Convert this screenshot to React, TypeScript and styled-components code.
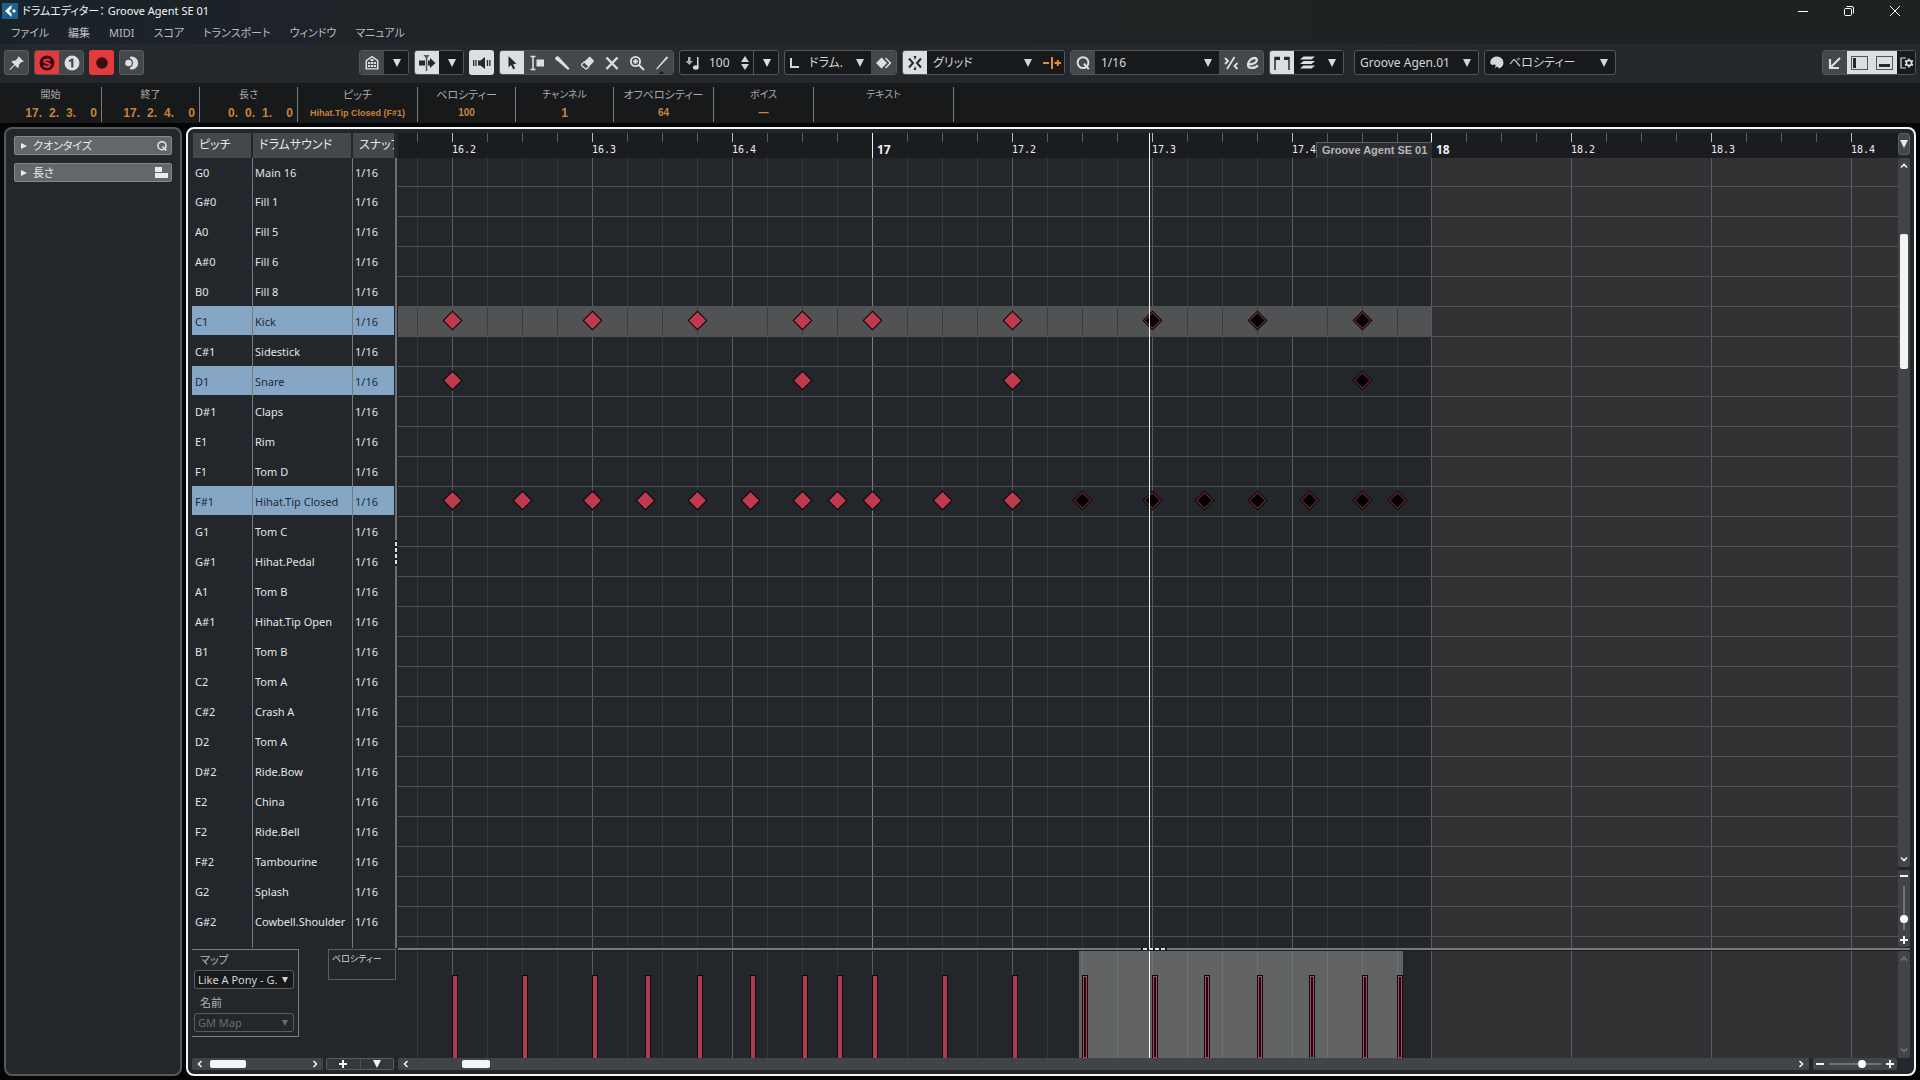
import React from "react";
import styled, { createGlobalStyle, css } from "styled-components";

const SANS = `"Noto Sans", "Noto Sans CJK JP", sans-serif`;

const Global = createGlobalStyle`
  *, *::before, *::after { box-sizing: border-box; }
  html, body { margin: 0; background: #050506; }
  body {
    font-family: ${SANS};
    font-feature-settings: "palt";
    font-size: 11px;
    color: #d4d6d8;
    overflow: hidden;
  }
  button, select, input { font: inherit; font-feature-settings: inherit; color: inherit; }
  svg { display: block; flex: none; }
  h1, h2, p { margin: 0; font-weight: 400; }
`;

const Window = styled.div`
  display: flex;
  flex-direction: column;
  height: 100vh;
`;

/* ---------- title and menu ---------- */

const Chrome = styled.header`
  display: flex;
  flex-direction: column;
  background: linear-gradient(90deg, #1a2229, #202427 30%, #1e2222 80%);
`;

const TitleBar = styled.div`
  display: flex;
  align-items: center;
  height: 22px;
  padding: 0 2px;
  gap: 4px;
`;

const Title = styled.h1`
  flex: 1;
  display: flex;
  gap: 3px;
  font-size: 11px;
  line-height: 20px;
  color: #f1f3f4;
`;

const WindowButtons = styled.div`
  display: flex;
`;

const WindowButton = styled.button`
  display: grid;
  place-items: center;
  width: 46px;
  height: 22px;
  padding: 0;
  border: 0;
  background: none;
`;

const MenuBar = styled.nav`
  display: flex;
  align-items: center;
  gap: 19px;
  height: 22px;
  padding: 0 11px;
`;

const MenuItem = styled.button`
  padding: 0;
  border: 0;
  background: none;
  font-size: 11px;
  line-height: 20px;
  color: #b9bcbf;
  white-space: nowrap;
`;

/* ---------- toolbar ---------- */

const Toolbar = styled.div`
  display: flex;
  align-items: center;
  gap: 5px;
  height: 39px;
  padding: 0 4px 2px;
  background: #24282c;
`;

const Group = styled.div<{ $before?: string }>`
  display: flex;
  height: 25px;
  border: 1px solid #53575a;
  border-radius: 3px;
  background: #17191b;
  overflow: hidden;
  margin-left: ${(p) => p.$before ?? "0"};
`;

type Tone = "grey" | "white" | "red" | "dark";
const tones = {
  grey: css`background: #45484b; color: #dcdedf;`,
  white: css`background: #dcdedf; color: #26292c;`,
  red: css`background: #e23b3f; color: #3a0d10;`,
  dark: css`background: #17191b; color: #dcdedf;`,
};

const ToolButton = styled.button<{ $tone?: Tone; $w?: number }>`
  display: grid;
  place-items: center;
  flex: none;
  width: ${(p) => p.$w ?? 25}px;
  height: 25px;
  margin: -1px 0;
  padding: 0;
  border: 0;
  ${(p) => tones[p.$tone ?? "grey"]}
  &:first-child { margin-left: -1px; }
  &:last-child { margin-right: -1px; }
`;

const Framed = styled(ToolButton)`
  border: 1px solid #5a5d60;
  border-radius: 3px;
  margin: 0;
  ${(p) => p.$tone !== "grey" && "border-color: transparent;"}
  &:first-child, &:last-child { margin: 0; }
`;

const PickBox = styled.div<{ $w: number }>`
  position: relative;
  display: flex;
  align-items: center;
  width: ${(p) => p.$w}px;
`;

const Pick = styled.select<{ $pad?: number; $end?: number; $size?: number }>`
  appearance: none;
  width: 100%;
  height: 100%;
  padding: 0 ${(p) => p.$end ?? 20}px 0 ${(p) => p.$pad ?? 6}px;
  border: 0;
  background: none;
  font-size: ${(p) => p.$size ?? 12}px;
  text-overflow: clip;
  option { background: #17191b; }
  &:disabled { opacity: 1; }
`;

const PickCaret = styled.span<{ $right?: number }>`
  position: absolute;
  right: ${(p) => p.$right ?? 7}px;
  top: 50%;
  transform: translateY(-50%);
  pointer-events: none;
`;

const PickIcon = styled.span`
  position: absolute;
  left: 4px;
  pointer-events: none;
`;

const VelocityBox = styled.label`
  display: flex;
  align-items: center;
  gap: 8px;
  width: 74px;
  padding-left: 5px;
  border-right: 1px solid #53575a;
`;

const NumberInput = styled.input`
  width: 24px;
  padding: 0;
  border: 0;
  background: none;
  font-size: 12px;
`;

/* ---------- info line ---------- */

const InfoLine = styled.dl`
  display: flex;
  flex: none;
  height: 40px;
  margin: 0;
  padding: 4px 0 1px;
  background: #17191b;
`;

const InfoCell = styled.div<{ $w: number }>`
  display: flex;
  flex-direction: column;
  width: ${(p) => p.$w}px;
  border-right: 1px solid #7c7f81;
  text-align: center;
`;

const InfoLabel = styled.dt<{ $big?: boolean }>`
  font-size: ${(p) => (p.$big ? 11 : 10)}px;
  line-height: 15px;
  color: #a9abad;
`;

const InfoValue = styled.dd<{ $size?: number }>`
  margin: 0;
  font-family: "Liberation Sans", sans-serif;
  font-size: ${(p) => p.$size ?? 12}px;
  font-weight: 700;
  line-height: 22px;
  color: #c8853a;
  white-space: nowrap;
`;

const Position = styled.span`
  display: grid;
  grid-template-columns: 22px 17px 17px 21px;
  justify-content: end;
  padding-right: 4px;
  text-align: right;
`;

/* ---------- work area ---------- */

const Work = styled.main`
  display: flex;
  flex: 1;
  min-height: 0;
  gap: 4px;
  padding: 4px 4px 4px;
`;

const Inspector = styled.aside`
  display: flex;
  flex-direction: column;
  flex: none;
  gap: 8px;
  width: 178px;
  padding: 7px 8px;
  border: 2px solid #55585a;
  border-radius: 8px;
  background: #23272b;
`;

const SectionButton = styled.button`
  display: flex;
  align-items: center;
  gap: 6px;
  height: 19px;
  padding: 0 3px 0 6px;
  border: 1px solid #85888a;
  border-radius: 2px;
  background: #646769;
  color: #e8eaeb;
  font-size: 11px;
  line-height: 17px;
  svg:last-child { margin-left: auto; }
`;

const Editor = styled.section`
  display: grid;
  flex: 1;
  min-width: 0;
  grid-template-columns: 206px minmax(0, 1fr) 12px;
  grid-template-rows: 25px minmax(0, 1fr) 3px 107px 12px;
  padding: 4px;
  border: 2px solid #f4f5f5;
  border-radius: 8px;
  background: #23272b;
`;

const ListPane = styled.div`
  position: relative;
  grid-column: 1;
  grid-row: 1 / 3;
  overflow: hidden;
`;

const SoundTable = styled.table`
  width: 202px;
  table-layout: fixed;
  border-collapse: separate;
  border-spacing: 0;
`;

const HeadCell = styled.th`
  height: 25px;
  padding: 0 0 2px 6px;
  border-right: 2px solid #23272b;
  background: #45484b;
  font-size: 12px;
  font-weight: 400;
  line-height: 20px;
  text-align: left;
  white-space: nowrap;
  overflow: hidden;
  color: #e6e8e9;
  &:first-child { border-left: 1px solid #23272b; }
  &:last-child { border-right: 0; }
`;

const SoundRow = styled.tr<{ $on: boolean }>`
  height: 30px;
  &:first-child { height: 28px; }
  color: ${(p) => (p.$on ? "#1d2b3a" : "#e2e4e5")};
  background: ${(p) => (p.$on ? "linear-gradient(#86a6c6 29px, transparent 29px)" : "none")};
`;

const SoundCell = styled.td`
  padding: 2px 0 0 2px;
  border-right: 1px solid #777a7c;
  font-size: 11px;
  line-height: 16px;
  white-space: nowrap;
  &:first-child { padding-left: 3px; }
  &:last-child { border-right: 0; }
`;

const Splitter = styled.div`
  position: absolute;
  top: 25px;
  bottom: 0;
  right: 1px;
  display: grid;
  align-content: center;
  width: 2px;
  background: #6d7072;
`;

const Grip = styled.span<{ $wide?: boolean }>`
  display: flex;
  flex-direction: ${(p) => (p.$wide ? "row" : "column")};
  gap: 2px;
  padding: ${(p) => (p.$wide ? "0 2px" : "2px 0")};
  background: #1a1c1e;
  i {
    width: ${(p) => (p.$wide ? 4 : 2)}px;
    height: ${(p) => (p.$wide ? 2 : 4)}px;
    background: #dfe1e2;
  }
`;

const Ruler = styled.div`
  position: relative;
  grid-column: 2;
  grid-row: 1;
  overflow: hidden;
  background: #1b1c20;
`;

const RulerLabel = styled.span<{ $bar: boolean }>`
  position: absolute;
  top: 9px;
  font-family: ${(p) => (p.$bar ? SANS : `"DejaVu Sans Mono", monospace`)};
  font-size: ${(p) => (p.$bar ? 12 : 10)}px;
  font-weight: ${(p) => (p.$bar ? 700 : 400)};
  line-height: 16px;
  color: #eceeef;
`;

const PartLabel = styled.span`
  position: absolute;
  top: 9px;
  height: 16px;
  padding: 0 5px;
  border: 1px solid #5c5f62;
  border-width: 1px 0 0 1px;
  background: #2c2d31;
  font: 700 11px/15px "Liberation Sans", sans-serif;
  color: #b5b7b9;
  white-space: nowrap;
`;

const NoteArea = styled.div`
  position: relative;
  grid-column: 2;
  grid-row: 2;
  overflow: hidden;
`;

const LaneArea = styled(NoteArea)`
  grid-row: 4;
`;

const Divider = styled.div`
  position: relative;
  grid-column: 2 / 4;
  grid-row: 3;
  background: linear-gradient(#77797b 2px, #1b1d20 2px);
`;

const GripSpot = styled.span`
  position: absolute;
  top: 0;
  transform: translateX(-50%);
`;

const Playhead = styled.span`
  position: absolute;
  top: 0;
  bottom: 0;
  width: 1px;
  background: #f5f6f6;
`;

const RulerMenu = styled.button`
  display: grid;
  place-items: center;
  grid-column: 3;
  grid-row: 1;
  height: 22px;
  padding: 0;
  border: 1px solid #5c5f62;
  border-radius: 3px;
  background: #45484b;
  color: #e4e6e7;
`;

/* ---------- lower left ---------- */

const LaneHead = styled.div`
  display: flex;
  justify-content: space-between;
  align-items: flex-start;
  grid-column: 1;
  grid-row: 3 / 5;
  padding: 1px 2px 0 0;
`;

const MapBox = styled.div`
  display: flex;
  flex-direction: column;
  width: 107px;
  height: 88px;
  padding: 0 4px 0 2px;
  border: 1px solid #7b7e80;
  border-left: 0;
`;

const MapLabel = styled.label<{ $lower?: boolean }>`
  padding: ${(p) => (p.$lower ? "4px 6px 0" : "0 6px")};
  font-size: 11px;
  line-height: 20px;
  color: #b4b6b8;
`;

const MapField = styled.div<{ $off?: boolean }>`
  position: relative;
  height: 19px;
  border: 1px solid #5a5d60;
  border-radius: 3px;
  background: ${(p) => (p.$off ? "none" : "#17191b")};
  color: ${(p) => (p.$off ? "#696c6f" : "#d4d6d8")};
`;

const LaneName = styled.button`
  width: 68px;
  height: 31px;
  padding: 0 0 12px 3px;
  border: 1px solid #5a5d60;
  background: none;
  font-size: 9px;
  line-height: 14px;
  text-align: left;
`;

/* ---------- scroll bars ---------- */

const HScroll = styled.div<{ $grow?: boolean; $w?: number }>`
  display: flex;
  align-items: center;
  flex: ${(p) => (p.$grow ? "1" : "none")};
  width: ${(p) => (p.$w ? `${p.$w}px` : "auto")};
  height: 12px;
  padding: 0 4px;
  border-radius: 2px;
  background: #424547;
`;

const VScroll = styled.div`
  display: flex;
  flex-direction: column;
  align-items: center;
  flex: 1;
  width: 12px;
  padding: 4px 0;
  border-radius: 2px;
  background: #424547;
`;

const ScrollArrow = styled.button<{ $off?: boolean }>`
  display: grid;
  place-items: center;
  flex: none;
  width: 8px;
  height: 8px;
  padding: 0;
  border: 0;
  background: none;
  color: ${(p) => (p.$off ? "#74777a" : "#f1f2f3")};
`;

const ScrollTrack = styled.div<{ $vertical?: boolean }>`
  display: flex;
  flex-direction: ${(p) => (p.$vertical ? "column" : "row")};
  flex: 1;
`;

const HThumb = styled.span<{ $before: number; $w: number }>`
  width: ${(p) => p.$w}px;
  height: 8px;
  margin-left: ${(p) => p.$before}px;
  border-radius: 2px;
  background: #f3f4f4;
`;

const VThumb = styled.span`
  width: 8px;
  height: 135px;
  margin-top: 64px;
  border-radius: 2px;
  background: #f3f4f4;
`;

const LeftBottom = styled.div`
  display: flex;
  gap: 3px;
  grid-column: 1;
  grid-row: 5;
  padding-right: 4px;
`;

const LanePair = styled.div`
  display: flex;
  flex: 1;
  border: 1px solid #5a5d60;
  border-radius: 2px;
  background: #33363a;
`;

const LaneButton = styled.button`
  display: grid;
  place-items: center;
  flex: 1;
  height: 10px;
  padding: 0;
  border: 0;
  background: none;
  color: #f1f2f3;
  & + & { border-left: 1px solid #4c4f52; }
`;

const MainBottom = styled.div`
  display: flex;
  gap: 4px;
  grid-column: 2;
  grid-row: 5;
  padding-right: 1px;
`;

const RightSide = styled.div`
  display: flex;
  flex-direction: column;
  gap: 3px;
  grid-column: 3;
  grid-row: 2;
  padding-bottom: 1px;
`;

const LaneSide = styled.div`
  display: flex;
  grid-column: 3;
  grid-row: 4;
`;

const ZoomV = styled(VScroll)`
  flex: none;
  height: 77px;
  padding: 2px 0 3px;
`;

const ZoomH = styled(HScroll)`
  width: 84px;
  padding: 0 3px;
`;

const ZoomRange = styled.input<{ $vertical?: boolean }>`
  appearance: none;
  flex: 1;
  min-width: 0;
  min-height: 0;
  margin: ${(p) => (p.$vertical ? "6px 0" : "0 5px")};
  background: none;
  ${(p) => p.$vertical && "writing-mode: vertical-lr; width: 8px;"}
  &::-webkit-slider-runnable-track {
    ${(p) => (p.$vertical ? "width: 2px; height: 100%;" : "height: 2px;")}
    background: #717476;
  }
  &::-webkit-slider-thumb {
    appearance: none;
    width: 8px;
    height: 8px;
    ${(p) => (p.$vertical ? "margin-left: -3px;" : "margin-top: -3px;")}
    border-radius: 50%;
    background: #fff;
  }
`;

/* ---------- data ---------- */

const sounds: [string, string][] = [
  ["G0", "Main 16"], ["G#0", "Fill 1"], ["A0", "Fill 5"], ["A#0", "Fill 6"], ["B0", "Fill 8"],
  ["C1", "Kick"], ["C#1", "Sidestick"], ["D1", "Snare"], ["D#1", "Claps"], ["E1", "Rim"],
  ["F1", "Tom D"], ["F#1", "Hihat.Tip Closed"], ["G1", "Tom C"], ["G#1", "Hihat.Pedal"],
  ["A1", "Tom B"], ["A#1", "Hihat.Tip Open"], ["B1", "Tom B"], ["C2", "Tom A"],
  ["C#2", "Crash A"], ["D2", "Tom A"], ["D#2", "Ride.Bow"], ["E2", "China"],
  ["F2", "Ride.Bell"], ["F#2", "Tambourine"], ["G2", "Splash"], ["G#2", "Cowbell.Shoulder"],
  ["A2", "Crash B"],
];
const selectedPitches = ["C1", "D1", "F#1"];

const hits: { row: number; steps: number[] }[] = [
  { row: 5, steps: [0, 4, 7, 10, 12, 16, 20, 23, 26] },
  { row: 7, steps: [0, 10, 16, 26] },
  { row: 11, steps: [0, 2, 4, 5.5, 7, 8.5, 10, 11, 12, 14, 16, 18, 20, 21.5, 23, 24.5, 26, 27] },
];
const firstSelected = 18;
const partEnd = 28;

/** Horizontal place of a sixteenth step, counted from bar 16 beat 2. */
const stepX = (step: number) => Math.floor(54.89 + step * 34.968);
const steps = Array.from({ length: 42 }, (_, i) => i - 1);
const rowLines = Array.from({ length: 70 }, (_, i) => 28 + i * 30);
const playheadX = 751;

const beats: [number, string][] = [
  [0, "16.2"], [4, "16.3"], [8, "16.4"], [12, "17"], [16, "17.2"], [20, "17.3"],
  [24, "17.4"], [28, "18"], [32, "18.2"], [36, "18.3"], [40, "18.4"],
];

/* ---------- icons ---------- */

const Svg = ({ s = 16, children }: { s?: number; children: React.ReactNode }) => (
  <svg width={s} height={s} viewBox="0 0 16 16" fill="currentColor" aria-hidden="true">{children}</svg>
);
const Caret = ({ s = 8 }: { s?: number }) => (
  <svg width={s} height={s} viewBox="0 0 8 8" fill="currentColor" aria-hidden="true"><path d="M0 0h8L4 8z" /></svg>
);
const Chevron = ({ turn }: { turn: number }) => (
  <svg width="8" height="8" viewBox="0 0 8 8" fill="none" stroke="currentColor" strokeWidth="1.6" aria-hidden="true">
    <path d="M2.5 1l3 3-3 3" transform={`rotate(${turn} 4 4)`} />
  </svg>
);
const Minus = () => <svg width="8" height="8" aria-hidden="true"><path d="M0 3h8v2H0z" fill="currentColor" /></svg>;
const Plus = () => <svg width="8" height="8" aria-hidden="true"><path d="M0 3h3V0h2v3h3v2H5v3H3V5H0z" fill="currentColor" /></svg>;
const QGlyph = ({ s = 16 }: { s?: number }) => (
  <Svg s={s}><circle cx="8" cy="7.6" r="5.4" fill="none" stroke="currentColor" strokeWidth="2" /><path d="M8 9.2l1.6-1.2 5 5.4-1.6 1.4z" /></Svg>
);

const icons = {
  pin: <Svg><path d="M9.6 1.2l5.2 5.2-1.6.6-1 .2-2.4 2.5.1 2.3-1.1 1.1-2.9-2.8-4.4 4.4-.9.2.2-.9 4.5-4.4L2.4 6.8l1.2-1.1 2.4.1 2.5-2.4.2-1z" /></Svg>,
  solo: <Svg><circle cx="8" cy="8" r="7.5" /><path d="M11 5.8C10.500 4.200 5.200 3.800 5.200 6.200c0 2.300 5.700 1.300 5.700 3.800 0 2.400-5.500 2.100-6 .2" fill="none" stroke="#e23b3f" strokeWidth="1.900" /></Svg>,
  one: <Svg><circle cx="8" cy="8" r="7.5" /><path d="M7.200 12.500V6.200L5 7.300V5.200l2.700-1.700h1.700v9z" fill="#45484b" /></Svg>,
  rec: <Svg><circle cx="8" cy="8" r="5.8" /></Svg>,
  moon: <Svg><path d="M6.500 1.500a6.600 6.600 0 1 1 0 13l-.8-1.800a5 5 0 0 0 0-9.400z" /><circle cx="4.500" cy="8" r="3.300" /></Svg>,
  house: <Svg><path d="M8 .8l6.500 4.400V14.500h-13V5.200z" /><path d="M3 6v7.200h10V6L8 2.600z" fill="#45484b" /><path d="M6.500 4h3v2h-3zM4 7h2.300v2H4zM7 7h2v2H7zM9.700 7H12v2H9.700zM4 10h2.300v2H4zM7 10h2v2H7zM9.700 10H12v2H9.700z" /></Svg>,
  follow: <svg width="18" height="16" viewBox="0 0 18 16" fill="currentColor" aria-hidden="true"><path d="M1 5.500h6v5H1zM10 5.500h2V3l5.500 5-5.500 5v-2.500h-2z" /><path d="M5.500 0h6L9.300 3v13H7.800V3z" opacity=".75" /></svg>,
  speaker: <svg width="20" height="16" viewBox="0 0 20 16" fill="currentColor" aria-hidden="true"><path d="M6 5.500h2.500L13 2v12l-4.500-3.500H6zM1 5h1.300v6H1zM3.300 5h1.300v6H3.300zM14.800 5h1.300v6h-1.300zM17.200 5h1.300v6h-1.300z" /></svg>,
  arrow: <Svg><path d="M4.500 1l8 7.800-3.400.3 2 4.300-2 .9-2-4.400-2.600 2.400z" /></Svg>,
  range: <Svg><path d="M1.500 1.500h5M1.500 14.500h5M4 1.500v13" fill="none" stroke="currentColor" strokeWidth="1.6" /><path d="M7.500 4.500H15v7H7.500z" /></Svg>,
  stick: <Svg><path d="M1.500 2.500a2 2 0 0 1 3.500-.5L15.500 13.500l-1.500 1.500L3 5.500a2 2 0 0 1-1.500-3z" /></Svg>,
  eraser: <Svg><path d="M9.800 2.300c.6-.6 1.200-.6 1.800 0l2.900 2.900c.6.6.6 1.200 0 1.800L10 11.500 5.300 6.800z" /><path d="M5.300 6.800L10 11.500l-2 2c-.6.6-1.200.6-1.800 0L2.900 10.700c-.6-.6-.6-1.200 0-1.800z" fill="none" stroke="currentColor" strokeWidth="1.300" /></Svg>,
  cross: <Svg><path d="M2.500 2.500l11 11.500M13.500 2.500L2.500 14" fill="none" stroke="currentColor" strokeWidth="2.400" /></Svg>,
  zoom: <Svg><circle cx="6.500" cy="6.500" r="4.600" fill="none" stroke="currentColor" strokeWidth="1.900" /><path d="M10 10l5 5M6.500 4v5M4 6.500h5" stroke="currentColor" strokeWidth="1.900" /></Svg>,
  line: <svg width="16" height="24" viewBox="0 -4 16 24" fill="currentColor" aria-hidden="true"><path d="M12.500 1.500l1.800 1L3.500 14l-2 .5z" /><path d="M3.500 20l4-4 4 4z" fill="#17191b" /></svg>,
  insertVel: <Svg><path d="M3 2h2.500v4H8L4.300 10 .500 6H3z" opacity=".8" /><path d="M12 2h1.500v10.500H12z" /><ellipse cx="10.800" cy="12.500" rx="2.800" ry="2.200" /></Svg>,
  spin: <svg width="8" height="14" viewBox="0 0 8 14" fill="currentColor" aria-hidden="true"><path d="M4 0l4 6H0zM4 14l4-6H0z" /></svg>,
  corner: <Svg><path d="M1 3h2v8h7v2H1z" /></Svg>,
  diamonds: <Svg><path d="M5.500 2.500L11 8l-5.500 5.500L0 8zM9 3.500l1-1L15.500 8 10 13.500l-1-1L13.300 8z" /></Svg>,
  snap: <Svg><path d="M2 3.500L6 8l-4 4.500M14 3.500L10 8l4 4.500" fill="none" stroke="currentColor" strokeWidth="2" /><path d="M6.500 1h3L8 5zM6.500 15h3L8 11z" /></Svg>,
  gridRel: <svg width="18" height="14" viewBox="0 0 18 14" fill="none" stroke="#e08f3c" strokeWidth="2" aria-hidden="true"><path d="M0 7h6M9 1v12M11.500 7H18M14.800 4v6" /></svg>,
  swing: <Svg><path d="M2 3l3 3-3 3M11.500 2L4 14M14.500 8l-3 3 3 3" fill="none" stroke="currentColor" strokeWidth="1.800" /></Svg>,
  edit: <Svg><path d="M3.500 9.500C13 9 13.500 3.500 9.500 3 6 2.800 3 7 3 9.800 3 14 9 13.800 13 10.500" fill="none" stroke="currentColor" strokeWidth="2.300" /></Svg>,
  bars: <svg width="18" height="16" viewBox="0 0 18 16" aria-hidden="true"><path d="M2 15V2.500h4V5M16 15V2.500h-4V5" fill="none" stroke="currentColor" strokeWidth="1.500" /><path d="M2 2h5v3H2zM11 2h5v3h-5z" fill="currentColor" /></svg>,
  layers: <Svg><path d="M4.500 1.500H16l-3.500 3H1zM4.500 6H16l-3.500 3H1zM4.500 10.500H16l-3.500 3H1z" /></Svg>,
  palette: <Svg><path d="M8 1.500a6.500 6.200 0 1 1 0 12.400c-1.700 0-2.300-1-1.600-2.400.7-1.500-.3-2.300-1.800-1.700-1.600.5-3.300-.2-3.300-2.300C1.300 4 4.300 1.500 8 1.500z" /><circle cx="8" cy="13.500" r="1.700" fill="#17191b" /></Svg>,
  corner2: <Svg><path d="M3 4v9h9M3.500 12.500L13 3" fill="none" stroke="currentColor" strokeWidth="2.200" /></Svg>,
  panelLeft: <svg width="17" height="14" aria-hidden="true"><rect x=".5" y=".5" width="16" height="13" fill="none" stroke="#55585a" /><path d="M2 2h3v10H2z" fill="#26292c" /></svg>,
  panelLow: <svg width="17" height="14" aria-hidden="true"><rect x=".5" y=".5" width="16" height="13" fill="none" stroke="#55585a" /><path d="M3 8h11v3H3z" fill="#26292c" /></svg>,
  setup: <svg width="14" height="12" viewBox="0 0 14 12" fill="none" stroke="currentColor" aria-hidden="true"><path d="M6 1H1v10h5" strokeWidth="1.200" /><circle cx="9" cy="6" r="2.600" strokeWidth="1.600" /><path d="M9 1.400v2M9 8.600v2M5 3.700l1.700 1M11.300 7.300l1.700 1M5 8.300l1.700-1M11.300 4.700l1.700-1" strokeWidth="1.600" /></svg>,
};

const Dropdown = ({ label, value, w, pad, right, icon, size }: {
  label: string; value: string; w: number; pad?: number; right?: number; icon?: React.ReactNode; size?: number;
}) => (
  <PickBox $w={w}>
    {icon && <PickIcon>{icon}</PickIcon>}
    <Pick aria-label={label} $pad={pad} $size={size} defaultValue={value}><option>{value}</option></Pick>
    <PickCaret $right={right}><Caret /></PickCaret>
  </PickBox>
);

/* ---------- parts ---------- */

const Arrange = () => (
  <svg width="100%" height="100%" shapeRendering="crispEdges" role="img" aria-label="ノート">
    <rect x={stepX(partEnd)} width="100%" height="100%" fill="#323235" />
    {steps.filter((s) => s < partEnd || s % 4 === 0).map((s) => (
      <rect key={s} x={stepX(s)} width="1" height="100%" fill={s === 12 ? "#7b7e80" : s % 4 === 0 ? "#5b5e61" : "#34383b"} />
    ))}
    {rowLines.map((y) => <rect key={y} y={y} width="100%" height="1" fill="#505356" />)}
    <rect y="148" width={stepX(partEnd)} height="31" fill="#505253" />
    {steps.filter((s) => s < partEnd && s % 4 !== 0).map((s) => (
      <rect key={s} x={stepX(s)} y="149" width="1" height="28" fill="#3b3e40" />
    ))}
    {hits.map(({ row, steps: at }) => at.map((s) => {
      const x = stepX(s);
      const y = 12 + row * 30;
      const on = s >= firstSelected;
      const diamond = (r: number) => `M${x} ${y - r}l${r} ${r}l${-r} ${r}l${-r} ${-r}z`;
      return (
        <g key={`${row}-${s}`} shapeRendering="auto" transform="translate(.5 .5)">
          <path d={diamond(10)} fill="#0b0506" />
          <path d={diamond(8.5)} fill={on ? "#8d3442" : "#c03a4f"} />
          {on && <path d={diamond(7.3)} fill="#000" />}
        </g>
      );
    }))}
  </svg>
);

const VelocityLane = () => (
  <svg width="100%" height="100%" shapeRendering="crispEdges" role="img" aria-label="ベロシティー">
    <rect x={stepX(partEnd)} width="100%" height="100%" fill="#323235" />
    <rect x="681" width="324" height="107" fill="#616364" />
    {steps.filter((s) => s < partEnd || s % 4 === 0).map((s) => (
      <rect key={s} x={stepX(s)} width="1" height="100%" fill={s >= 18 && s < partEnd ? "#707373" : s % 4 === 0 ? "#5b5e61" : "#34383b"} />
    ))}
    {hits[2].steps.map((s) => {
      const on = s >= firstSelected;
      return (
        <g key={s}>
          <rect x={stepX(s)} y="24" width="6" height="83" fill="#170709" />
          <rect x={stepX(s) + 1} y="25" width="4" height="82" fill={on ? "#a0506a" : "#ac3d50"} />
          {on && <rect x={stepX(s) + 2} y="26" width="2" height="80" fill="#24060b" />}
        </g>
      );
    })}
  </svg>
);

export default function App() {
  return (
    <>
      <Global />
      <Window>
        <Chrome>
          <TitleBar>
            <svg width="16" height="16" aria-hidden="true">
              <rect width="16" height="16" fill="#1d6190" />
              <path d="M9.500 2L3 8l6.500 6V10.500L7 8l2.500-2.500zM12 6l2 2-2 2-2-2z" fill="#fff" />
            </svg>
            <Title><span>ドラムエディター：</span><span>Groove Agent SE 01</span></Title>
            <WindowButtons>
              <WindowButton aria-label="最小化"><svg width="10" height="10"><path d="M0 5.500h10" stroke="#fff" /></svg></WindowButton>
              <WindowButton aria-label="元に戻す">
                <svg width="10" height="10" fill="none" stroke="#fff"><rect x=".5" y="2.500" width="7" height="7" rx="1" /><path d="M2.500.5H8A1.500 1.500 0 0 1 9.500 2v5.500" /></svg>
              </WindowButton>
              <WindowButton aria-label="閉じる"><svg width="10" height="10"><path d="M0 0l10 10M10 0L0 10" stroke="#fff" /></svg></WindowButton>
            </WindowButtons>
          </TitleBar>
          <MenuBar>
            {["ファイル", "編集", "MIDI", "スコア", "トランスポート", "ウィンドウ", "マニュアル"].map((m) => <MenuItem key={m}>{m}</MenuItem>)}
          </MenuBar>
        </Chrome>

        <Toolbar>
          <Framed $tone="grey" aria-label="固定">{icons.pin}</Framed>
          <Group>
            <ToolButton $tone="red" aria-label="ソロ">{icons.solo}</ToolButton>
            <ToolButton aria-label="単独">{icons.one}</ToolButton>
          </Group>
          <Framed $tone="red" aria-label="録音">{icons.rec}</Framed>
          <Framed $tone="grey" aria-label="レトロスペクティブ">{icons.moon}</Framed>
          <Group $before="210px">
            <ToolButton aria-label="表示">{icons.house}</ToolButton>
            <ToolButton $tone="dark" aria-label="表示メニュー"><Caret /></ToolButton>
          </Group>
          <Group>
            <ToolButton $tone="white" aria-label="自動スクロール">{icons.follow}</ToolButton>
            <ToolButton $tone="dark" aria-label="スクロール設定"><Caret /></ToolButton>
          </Group>
          <Framed $tone="white" aria-label="試聴">{icons.speaker}</Framed>
          <Group>
            <ToolButton $tone="white" aria-label="選択">{icons.arrow}</ToolButton>
            <ToolButton aria-label="範囲">{icons.range}</ToolButton>
            <ToolButton aria-label="スティック">{icons.stick}</ToolButton>
            <ToolButton aria-label="消しゴム">{icons.eraser}</ToolButton>
            <ToolButton aria-label="ミュート">{icons.cross}</ToolButton>
            <ToolButton aria-label="ズーム">{icons.zoom}</ToolButton>
            <ToolButton aria-label="ライン">{icons.line}</ToolButton>
          </Group>
          <Group>
            <VelocityBox>
              {icons.insertVel}
              <NumberInput aria-label="挿入ベロシティー" defaultValue="100" />
              {icons.spin}
            </VelocityBox>
            <ToolButton $tone="dark" aria-label="ベロシティーメニュー"><Caret /></ToolButton>
          </Group>
          <Group>
            <Dropdown label="カラー" value="ドラム." w={86} pad={24} icon={icons.corner} />
            <ToolButton $w={26} aria-label="ドラムマップ">{icons.diamonds}</ToolButton>
          </Group>
          <Group>
            <ToolButton $tone="white" aria-label="スナップ">{icons.snap}</ToolButton>
            <Dropdown label="スナップの種類" value="グリッド" w={112} />
            <ToolButton $tone="dark" $w={26} aria-label="グリッド相対">{icons.gridRel}</ToolButton>
          </Group>
          <Group>
            <ToolButton aria-label="クオンタイズ"><QGlyph /></ToolButton>
            <Dropdown label="クオンタイズ値" value="1/16" w={124} />
            <ToolButton $w={23} aria-label="スウィング">{icons.swing}</ToolButton>
            <ToolButton $w={22} aria-label="クオンタイズ設定">{icons.edit}</ToolButton>
          </Group>
          <Group>
            <ToolButton $tone="white" aria-label="パート境界">{icons.bars}</ToolButton>
            <ToolButton $tone="dark" aria-label="パート">{icons.layers}</ToolButton>
            <ToolButton $tone="dark" aria-label="パートメニュー"><Caret /></ToolButton>
          </Group>
          <Group $before="5px"><Dropdown label="パート名" value="Groove Agen.01" w={123} pad={5} /></Group>
          <Group><Dropdown label="イベントカラー" value="ベロシティー" w={130} pad={24} icon={icons.palette} /></Group>
          <Group $before="auto">
            <ToolButton aria-label="別ウィンドウ">{icons.corner2}</ToolButton>
            <ToolButton $tone="white" aria-label="左ゾーン">{icons.panelLeft}</ToolButton>
            <ToolButton $tone="white" aria-label="下ゾーン">{icons.panelLow}</ToolButton>
            <ToolButton $tone="dark" $w={19} aria-label="設定">{icons.setup}</ToolButton>
          </Group>
        </Toolbar>

        <InfoLine>
          <InfoCell $w={102}><InfoLabel>開始</InfoLabel><InfoValue><Position><span>17.</span><span>2.</span><span>3.</span><span>0</span></Position></InfoValue></InfoCell>
          <InfoCell $w={98}><InfoLabel>終了</InfoLabel><InfoValue><Position><span>17.</span><span>2.</span><span>4.</span><span>0</span></Position></InfoValue></InfoCell>
          <InfoCell $w={98}><InfoLabel>長さ</InfoLabel><InfoValue><Position><span>0.</span><span>0.</span><span>1.</span><span>0</span></Position></InfoValue></InfoCell>
          <InfoCell $w={120}><InfoLabel $big>ピッチ</InfoLabel><InfoValue $size={9}>Hihat.Tip Closed (F#1)</InfoValue></InfoCell>
          <InfoCell $w={98}><InfoLabel $big>ベロシティー</InfoLabel><InfoValue $size={10}>100</InfoValue></InfoCell>
          <InfoCell $w={98}><InfoLabel>チャンネル</InfoLabel><InfoValue>1</InfoValue></InfoCell>
          <InfoCell $w={100}><InfoLabel $big>オフベロシティー</InfoLabel><InfoValue $size={10}>64</InfoValue></InfoCell>
          <InfoCell $w={100}><InfoLabel>ボイス</InfoLabel><InfoValue $size={10}>—</InfoValue></InfoCell>
          <InfoCell $w={140}><InfoLabel>テキスト</InfoLabel></InfoCell>
        </InfoLine>

        <Work>
          <Inspector>
            <SectionButton><svg width="6" height="6"><path d="M0 0l6 3-6 3z" fill="currentColor" /></svg>クオンタイズ<QGlyph s={12} /></SectionButton>
            <SectionButton><svg width="6" height="6"><path d="M0 0l6 3-6 3z" fill="currentColor" /></svg>長さ<svg width="13" height="11"><path d="M0 0h7v5H0zM0 6h13v5H0z" fill="currentColor" /></svg></SectionButton>
          </Inspector>

          <Editor>
            <ListPane>
              <SoundTable>
                <colgroup><col style={{ width: 61 }} /><col style={{ width: 100 }} /><col /></colgroup>
                <thead><tr><HeadCell>ピッチ</HeadCell><HeadCell>ドラムサウンド</HeadCell><HeadCell>スナップ</HeadCell></tr></thead>
                <tbody>
                  {sounds.map(([pitch, name]) => (
                    <SoundRow key={pitch} $on={selectedPitches.includes(pitch)}>
                      <SoundCell>{pitch}</SoundCell><SoundCell>{name}</SoundCell><SoundCell>1/16</SoundCell>
                    </SoundRow>
                  ))}
                </tbody>
              </SoundTable>
              <Splitter><Grip><i /><i /><i /><i /></Grip></Splitter>
            </ListPane>

            <Ruler>
              <svg width="100%" height="25" shapeRendering="crispEdges" aria-hidden="true">
                {steps.map((s) => (
                  <rect key={s} x={stepX(s)} width="1" height={s === 12 || s === 28 ? 25 : 9} fill={s === 12 || s === 28 ? "#f0f1f2" : s % 4 === 0 ? "#b5b8ba" : "#5b5e61"} />
                ))}
              </svg>
              {beats.map(([s, text]) => {
                const bar = !text.includes(".");
                return <RulerLabel key={text} $bar={bar} style={{ left: stepX(s) + (bar ? 5 : 0) }}>{text}</RulerLabel>;
              })}
              <PartLabel style={{ left: stepX(partEnd) - 115 }}>Groove Agent SE 01</PartLabel>
              <Playhead style={{ left: playheadX }} />
            </Ruler>
            <RulerMenu aria-label="ルーラー"><Caret /></RulerMenu>

            <NoteArea><Arrange /><Playhead style={{ left: playheadX }} /></NoteArea>
            <RightSide>
              <VScroll>
                <ScrollArrow aria-label="上へ"><Chevron turn={-90} /></ScrollArrow>
                <ScrollTrack $vertical><VThumb /></ScrollTrack>
                <ScrollArrow aria-label="下へ"><Chevron turn={90} /></ScrollArrow>
              </VScroll>
              <ZoomV>
                <ScrollArrow aria-label="縮小"><Minus /></ScrollArrow>
                <ZoomRange $vertical type="range" aria-label="縦ズーム" defaultValue={80} />
                <ScrollArrow aria-label="拡大"><Plus /></ScrollArrow>
              </ZoomV>
            </RightSide>

            <LaneHead>
              <MapBox>
                <MapLabel htmlFor="map">マップ</MapLabel>
                <MapField><Pick id="map" $pad={3} $end={12} $size={11} defaultValue="Like A Pony - G."><option>Like A Pony - G.</option></Pick><PickCaret $right={5}><Caret s={6} /></PickCaret></MapField>
                <MapLabel $lower htmlFor="map-name">名前</MapLabel>
                <MapField $off><Pick id="map-name" disabled $pad={3} $end={12} $size={11} defaultValue="GM Map"><option>GM Map</option></Pick><PickCaret $right={5}><Caret s={6} /></PickCaret></MapField>
              </MapBox>
              <LaneName>ベロシティー</LaneName>
            </LaneHead>
            <Divider><GripSpot style={{ left: 756 }}><Grip $wide><i /><i /><i /><i /></Grip></GripSpot></Divider>
            <LaneArea><VelocityLane /><Playhead style={{ left: playheadX }} /></LaneArea>
            <LaneSide>
              <VScroll>
                <ScrollArrow $off aria-label="レーンを上へ"><Chevron turn={-90} /></ScrollArrow>
                <ScrollTrack $vertical />
                <ScrollArrow $off aria-label="レーンを下へ"><Chevron turn={90} /></ScrollArrow>
              </VScroll>
            </LaneSide>

            <LeftBottom>
              <HScroll $w={131}>
                <ScrollArrow aria-label="リストを左へ"><Chevron turn={180} /></ScrollArrow>
                <ScrollTrack><HThumb $before={6} $w={36} /></ScrollTrack>
                <ScrollArrow aria-label="リストを右へ"><Chevron turn={0} /></ScrollArrow>
              </HScroll>
              <LanePair>
                <LaneButton aria-label="レーン追加"><Plus /></LaneButton>
                <LaneButton aria-label="レーンメニュー"><Caret /></LaneButton>
              </LanePair>
            </LeftBottom>
            <MainBottom>
              <HScroll $grow>
                <ScrollArrow aria-label="左へ"><Chevron turn={180} /></ScrollArrow>
                <ScrollTrack><HThumb $before={52} $w={28} /></ScrollTrack>
                <ScrollArrow aria-label="右へ"><Chevron turn={0} /></ScrollArrow>
              </HScroll>
              <ZoomH>
                <ScrollArrow aria-label="横に縮小"><Minus /></ScrollArrow>
                <ZoomRange type="range" aria-label="横ズーム" defaultValue={65} />
                <ScrollArrow aria-label="横に拡大"><Plus /></ScrollArrow>
              </ZoomH>
            </MainBottom>
          </Editor>
        </Work>
      </Window>
    </>
  );
}
